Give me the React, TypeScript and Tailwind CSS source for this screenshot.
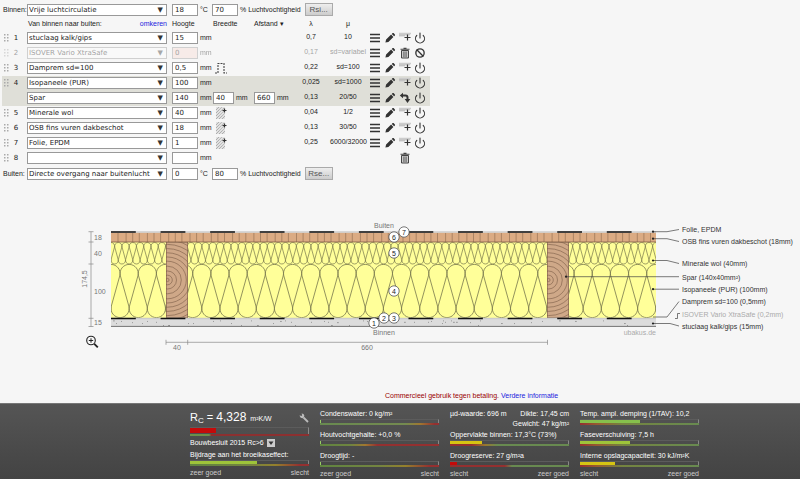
import { ReactNode } from "react";
import { Ban, Power } from "lucide-react";

type ActionKind = "menu" | "edit" | "add" | "power" | "trash" | "ban" | "turn" | "none";

interface Layer {
  nr: string;
  name: string;
  height: string;
  lambda: string;
  mu: string;
  width?: string;
  spacing?: string;
  shape?: "stud" | "hatch";
  selected?: boolean;
  disabled?: boolean;
  actions: ActionKind[];
}

const LAYERS: Layer[] = [
  { nr: "1", name: "stuclaag kalk/gips", height: "15", lambda: "0,7", mu: "10", actions: ["menu", "edit", "add", "power"] },
  { nr: "2", name: "ISOVER Vario XtraSafe", height: "0", lambda: "0,17", mu: "sd=variabel", disabled: true, actions: ["menu", "edit", "trash", "ban"] },
  { nr: "3", name: "Damprem sd=100", height: "0,5", lambda: "0,22", mu: "sd=100", shape: "stud", actions: ["menu", "edit", "add", "power"] },
  { nr: "4", name: "Isopaneele (PUR)", height: "100", lambda: "0,025", mu: "sd=1000", selected: true, actions: ["menu", "edit", "add", "power"] },
  { nr: "", name: "Spar", height: "140", lambda: "0,13", mu: "20/50", width: "40", spacing: "660", selected: true, actions: ["menu", "edit", "turn", "power"] },
  { nr: "5", name: "Minerale wol", height: "40", lambda: "0,04", mu: "1/2", shape: "hatch", actions: ["menu", "edit", "add", "power"] },
  { nr: "6", name: "OSB fins vuren dakbeschot", height: "18", lambda: "0,13", mu: "30/50", shape: "hatch", actions: ["menu", "edit", "add", "power"] },
  { nr: "7", name: "Folie, EPDM", height: "1", lambda: "0,25", mu: "6000/32000", shape: "hatch", actions: ["menu", "edit", "add", "power"] },
  { nr: "8", name: "", height: "", lambda: "", mu: "", actions: ["none", "none", "trash", "none"] },
];

const ACTION_LABELS: Record<ActionKind, string> = {
  menu: "Menu",
  edit: "Bewerken",
  add: "Laag toevoegen",
  power: "Uitschakelen",
  trash: "Verwijderen",
  ban: "Inschakelen",
  turn: "Draaien",
  none: "",
};

function ActionIcon({ kind }: { kind: ActionKind }) {
  if (kind === "power") return <Power size={12} strokeWidth={2.2} />;
  if (kind === "ban") return <Ban size={10} strokeWidth={3.2} />;
  return (
    <svg width="12" height="12" viewBox="0 0 12 12" fill="none">
      {kind === "menu" && <path d="M1 2.5h10M1 6h10M1 9.5h10" stroke="#333" strokeWidth="1.5" />}
      {kind === "edit" && (
        <path d="M1.4 10.6l.7-3 5-5 2.3 2.3-5 5zM7.8 1.9l.8-.8q.5-.4 1 0l1.3 1.3q.4.5 0 1l-.8.8z" fill="#333" />
      )}
      {kind === "add" && (
        <>
          <path d="M0 1.5h12M0 3.8h6" stroke="#ccc" strokeWidth="1.6" />
          <path d="M0 2.8h11" stroke="#999" strokeWidth=".6" />
          <path d="M8.5 2.5v6M5.5 5.5h6" stroke="#333" strokeWidth="1.2" />
        </>
      )}
      {kind === "trash" && (
        <>
          <path d="M2.5 3.5h7v7.5h-7z" fill="#ccc" stroke="#444" />
          <path d="M1.5 2.3h9M4.5 1.2h3" stroke="#444" strokeWidth="1.1" />
          <path d="M4.7 4.5v5.5M6 4.5v5.5M7.3 4.5v5.5" stroke="#555" strokeWidth=".7" />
        </>
      )}
      {kind === "turn" && (
        <>
          <path d="M3 3.5h3.5q2 0 2 2v2" stroke="#333" strokeWidth="2" />
          <path d="M4 .8v5.4L.8 3.5zM5.7 7h5.6l-2.8 4z" fill="#333" />
        </>
      )}
    </svg>
  );
}

function ShapeIcon({ shape }: { shape: "stud" | "hatch" }) {
  if (shape === "stud") {
    return (
      <svg width="14" height="12" viewBox="0 0 14 12" fill="none">
        <path d="M1 11h3V1.500h6V11h3" stroke="#444" strokeWidth="1.1" strokeDasharray="2 1" />
      </svg>
    );
  }
  return (
    <svg width="14" height="12" viewBox="0 0 14 12" fill="none">
      <path d="M2 0h9v12H2z" fill="#e2e2e2" />
      <path d="M2 3l3-3M2 6l6-6M2 9l8-8M2 12l9-9M5 12l6-6M8 12l3-3" stroke="#888" strokeWidth=".8" strokeDasharray="1 .6" />
      <path d="M10.500 1.500v4M8.500 3.500h4" stroke="#333" strokeWidth="1.2" />
    </svg>
  );
}

function SelectBox({ label, value, disabled }: { label: string; value: string; disabled?: boolean }) {
  return (
    <span className="relative block h-3 w-[140px] shrink-0">
      <select
        aria-label={label}
        disabled={disabled}
        defaultValue={value}
        className="block h-3 w-full appearance-none border border-[#999] bg-white pl-px font-['DejaVu_Sans',sans-serif] text-[7px] leading-[10px] text-[#222]"
      >
        <option value={value}>{value}</option>
      </select>
      <span className="pointer-events-none absolute top-0 right-1 font-['DejaVu_Sans',sans-serif] text-[7px] leading-3 text-[#333]">▼</span>
    </span>
  );
}

function NumberBox({ label, value, narrow, disabled }: { label: string; value: string; narrow?: boolean; disabled?: boolean }) {
  return (
    <input
      type="text"
      aria-label={label}
      defaultValue={value}
      disabled={disabled}
      className={`block h-3 shrink-0 border border-[#999] pl-0.5 font-['DejaVu_Sans',sans-serif] text-[7px] leading-[10px] text-[#222] ${narrow ? "w-[21px]" : "w-[26px]"} ${disabled ? "bg-[#fbdcd4]" : "bg-white"}`}
    />
  );
}

function ClimateRow({ side, surface, temp, humidity, button }: { side: string; surface: string; temp: string; humidity: string; button: string }) {
  return (
    <div className="flex h-[15px] items-center pl-[3px]">
      <span className="w-6 shrink-0">{side}:</span>
      <SelectBox label={side} value={surface} />
      <span className="flex w-[45px] shrink-0 items-center gap-0.5 pl-[5px]">
        <NumberBox label={`${side} temperatuur`} value={temp} />
        °C
      </span>
      <label className="flex items-center gap-0.5 whitespace-nowrap">
        <NumberBox label={`${side} luchtvochtigheid`} value={humidity} />
        % Luchtvochtigheid
      </label>
      <button className="ml-1 h-[13px] w-7 border border-[#aaa] bg-linear-to-b from-[#eee] to-[#ccc] text-[8px] leading-none text-[#555]">
        {button}
      </button>
    </div>
  );
}

function LayerRow({ layer }: { layer: Layer }) {
  const label = layer.name || `laag ${layer.nr}`;
  const dim = layer.disabled ? "opacity-40" : "";
  return (
    <tr className={`h-[15px] align-top ${layer.selected ? "bg-[#dfdfd8]" : ""}`}>
      <td className={`pt-0.5 pl-0.5 ${dim}`}>
        {layer.nr && (
          <svg width="5" height="10" viewBox="0 0 5 10" fill="#aaa">
            <path d="M0 1h1.500v1.500H0zM3 1h1.500v1.500H3zM0 4h1.500v1.500H0zM3 4h1.500v1.500H3zM0 7h1.500v1.500H0zM3 7h1.500v1.500H3z" />
          </svg>
        )}
      </td>
      <td className={`pt-px text-center font-['DejaVu_Sans',sans-serif] leading-3 ${dim}`}>{layer.nr}</td>
      <td className={`px-[5px] pt-px ${dim}`}>
        <SelectBox label={`Materiaal ${label}`} value={layer.name} disabled={layer.disabled} />
      </td>
      <td className={`pt-px ${dim}`}>
        <span className="flex items-center gap-0.5">
          <NumberBox label={`Hoogte ${label}`} value={layer.height} disabled={layer.disabled} />
          mm
        </span>
      </td>
      <td className="pt-px">
        {layer.width && (
          <span className="flex items-center gap-0.5">
            <NumberBox label={`Breedte ${label}`} value={layer.width} narrow />
            mm
          </span>
        )}
        {layer.shape && (
          <button aria-label={`Vorm ${label}`} className="ml-px block">
            <ShapeIcon shape={layer.shape} />
          </button>
        )}
      </td>
      <td className="pt-px">
        {layer.spacing && (
          <span className="flex items-center gap-0.5">
            <NumberBox label={`Afstand ${label}`} value={layer.spacing} narrow />
            mm
          </span>
        )}
      </td>
      <td className={`text-center leading-3 ${dim}`}>{layer.lambda}</td>
      <td className={`text-center leading-3 whitespace-nowrap ${dim}`}>{layer.mu}</td>
      <td className="pt-px pl-px">
        <span className="flex">
          {layer.actions.map((kind, i) =>
            kind === "none" ? (
              <span key={i} className="w-[15px]" />
            ) : (
              <button key={i} aria-label={`${ACTION_LABELS[kind]} ${label}`} className="flex h-3 w-[15px] items-center justify-center text-[#333]">
                <ActionIcon kind={kind} />
              </button>
            )
          )}
        </span>
      </td>
    </tr>
  );
}

function LayerTable() {
  return (
    <table className="ml-0.5 w-[428px] table-fixed border-collapse">
      <colgroup>
        <col className="w-2" />
        <col className="w-3" />
        <col className="w-[150px]" />
        <col className="w-[41px]" />
        <col className="w-[41px]" />
        <col className="w-[38px]" />
        <col className="w-[38px]" />
        <col className="w-[36px]" />
        <col className="w-[64px]" />
      </colgroup>
      <thead>
        <tr className="h-3.5 text-left">
          <th></th>
          <th></th>
          <th className="px-[5px] font-normal">
            <span className="flex justify-between pl-px">
              Van binnen naar buiten:
              <a href="#omkeren" className="text-[#2222dd]">omkeren</a>
            </span>
          </th>
          <th className="font-normal">Hoogte</th>
          <th className="font-normal">Breedte</th>
          <th className="font-normal whitespace-nowrap">Afstand ▾</th>
          <th className="text-center font-normal">λ</th>
          <th className="text-center font-normal">μ</th>
          <th></th>
        </tr>
      </thead>
      <tbody>
        {LAYERS.map((layer) => (
          <LayerRow key={layer.nr + layer.name} layer={layer} />
        ))}
      </tbody>
    </table>
  );
}

const LEFT = 111;
const RIGHT = 656;
const STUDS = [166, 547];

// Continuous loop of circles joined by their inner tangents
function insulationPath(top: number, bottom: number, pitch: number) {
  const r = pitch / 2;
  const ct = top + r;
  const cb = bottom - r;
  const h = cb - ct;
  const tilt = Math.asin((2 * r) / Math.hypot(r, h)) - Math.atan(r / h);
  const dx = r * Math.cos(tilt);
  const dy = r * Math.sin(tilt);
  let d = "";
  for (let c = LEFT - pitch; c < RIGHT + pitch; c += pitch) {
    d += d ? "L" : "M";
    d += `${c - dx} ${ct + dy}A${r} ${r} 0 1 1 ${c + dx} ${ct + dy}`;
    d += `L${c + r - dx} ${cb - dy}A${r} ${r} 0 1 0 ${c + r + dx} ${cb - dy}`;
  }
  return d;
}

const MARKERS = [
  { n: 6, x: 394, y: 237 },
  { n: 7, x: 404, y: 232 },
  { n: 5, x: 394, y: 253 },
  { n: 4, x: 394, y: 291 },
  { n: 1, x: 374, y: 323 },
  { n: 2, x: 384, y: 318 },
  { n: 3, x: 394, y: 318 },
];

const CALLOUTS = [
  { text: "Folie, EPDM", y: 229, line: "M653 231.700H667L679 229.500", dot: [653, 231.7] },
  { text: "OSB fins vuren dakbeschot (18mm)", y: 241, line: "M653 238.700H667L679 241.500", dot: [653, 238.7] },
  { text: "Minerale wol (40mm)", y: 263, line: "M653 260.500H667L679 263.500", dot: [653, 260.5] },
  { text: "Spar (140x40mm²)", y: 277, line: "M566 276.700H679", dot: [566, 276.7] },
  { text: "Isopaneele (PUR) (100mm)", y: 289, line: "M653 289.200H679", dot: [653, 289.2] },
  { text: "Damprem sd=100 (0,5mm)", y: 301, line: "M653 317H667L679 301.500", dot: null },
  { text: "ISOVER Vario XtraSafe (0,2mm)", y: 314, line: "M675 318.500H677.500V313.500H680", dot: null, muted: true },
  { text: "stuclaag kalk/gips (15mm)", y: 326, line: "M653 323.500H670L679 326", dot: [653, 323.5] },
];

const SPECKLES = Array.from({ length: 56 }, (_, i) => ({
  x: LEFT + 2 + ((i * i * 31 + i * 97) % 541),
  y: 320.5 + ((i * i * 7 + i * 3) % 11) / 2.2,
  w: i % 4 === 0 ? 1.8 : 1,
}));

function Membrane({ y }: { y: number }) {
  return (
    <>
      <path d={`M${LEFT} ${y}H${RIGHT}`} stroke="#ccc" strokeWidth="1.3" />
      <path d={`M${LEFT} ${y}H${RIGHT}`} stroke="#111" strokeWidth="1.5" strokeDasharray="24.800 24.780" />
    </>
  );
}

function CrossSection() {
  return (
    <svg
      viewBox="75 215 725 140"
      className="h-auto w-full max-w-[725px] font-['Liberation_Sans',Arial,sans-serif] text-[7px]"
      role="img"
      aria-label="Doorsnede van de constructie"
      fill="none"
    >
      <defs>
        <clipPath id="section">
          <rect x={LEFT} y="231" width={RIGHT - LEFT} height="96" />
        </clipPath>
        {STUDS.map((x) => (
          <clipPath key={x} id={`stud-${x}`}>
            <rect x={x} y="242" width="22" height="76" />
          </clipPath>
        ))}
      </defs>

      <g clipPath="url(#section)">
        <rect x={LEFT} y="242" width={RIGHT - LEFT} height="76" fill="#ffff99" />
        <path d={insulationPath(242.5, 264, 7.27)} stroke="#77774c" strokeWidth=".7" />
        <path d={insulationPath(264.4, 317.6, 18.16)} stroke="#77774c" strokeWidth=".8" />
        <rect x={LEFT} y="232.500" width={RIGHT - LEFT} height="9.500" fill="#dbab83" />
        {Array.from({ length: 77 }, (_, i) => (
          <path key={i} d={`M${LEFT + 7 + i * 7.1 + ((i * 5) % 3) * 0.5} 233v9`} stroke="#8c6a4e" strokeWidth=".6" />
        ))}
        <path d={`M${LEFT} 242H${RIGHT}`} stroke="#7d5c44" strokeWidth=".8" />
        <rect x={LEFT} y="319" width={RIGHT - LEFT} height="7.500" fill="#dcdcdc" />
        {SPECKLES.map((s, i) => (
          <rect key={i} x={s.x} y={s.y} width={s.w} height=".8" fill="#8a8a8a" />
        ))}
        <path d={`M${LEFT} 326.400H${RIGHT}`} stroke="#555" strokeWidth=".8" />
      </g>

      {STUDS.map((x) => (
        <g key={x} clipPath={`url(#stud-${x})`} stroke="#7a5c46">
          <rect x={x} y="242" width="22" height="76" fill="#cfa888" strokeWidth="1.2" />
          {[1.6, 4.8, 9, 13.8, 18.8, 23, 27.2, 31.4, 35.6, 40].map((r) => (
            <circle key={r} cx={x + 1.5} cy="280" r={r} strokeWidth=".6" />
          ))}
        </g>
      ))}
      <Membrane y={232} />
      <Membrane y={318.5} />

      {/* Dimensions */}
      <g stroke="#888" strokeWidth=".7">
        <path d="M91 231.700V326.500M88.500 231.700h5M88.500 242h5M88.500 264h5M88.500 318.300h5M88.500 326.500h5" />
        <path d="M166 342.300H547.500M166 339.800v5M187.700 339.800v5M547.500 339.800v5" />
      </g>
      <g fill="#777">
        <text x="94" y="240">18</text>
        <text x="94" y="256">40</text>
        <text x="94" y="294">100</text>
        <text x="94" y="325">15</text>
        <text textAnchor="middle" transform="translate(87 279) rotate(-90)">174,5</text>
        <text x="177" y="350" textAnchor="middle">40</text>
        <text x="367" y="350" textAnchor="middle">660</text>
        <text x="384" y="228" textAnchor="middle">Buiten</text>
        <text x="384" y="335" textAnchor="middle">Binnen</text>
        <text x="656" y="335" textAnchor="end" fill="#aaa">ubakus.de</text>
      </g>

      {MARKERS.map((m) => (
        <g key={m.n}>
          <circle cx={m.x} cy={m.y} r="5.200" fill="#fff" stroke="#555" strokeWidth=".8" />
          <text x={m.x} y={m.y + 3} textAnchor="middle" fill="#222">{m.n}</text>
        </g>
      ))}

      {CALLOUTS.map((c) => (
        <g key={c.text}>
          <path d={c.line} stroke="#444" strokeWidth=".7" />
          {c.dot && <circle cx={c.dot[0]} cy={c.dot[1]} r="1.100" fill="#222" />}
          <text x="682" y={c.y + 3} fill={c.muted ? "#aaa" : "#333"}>{c.text}</text>
        </g>
      ))}

      {/* Zoom */}
      <g stroke="#222">
        <circle cx="91" cy="340.500" r="4.300" strokeWidth="1.100" />
        <path d="M88.800 340.500h4.400M91 338.300v4.400" strokeWidth="1" />
        <path d="M94.300 343.800L97.800 347.300" strokeWidth="1.900" />
      </g>
    </svg>
  );
}

const SCALES = {
  rc: "bg-[linear-gradient(90deg,#6c8f4a_0,#6c8f4a_16%,#8c3030_18%,#8c3030_100%)]",
  goodToBad: "bg-[linear-gradient(90deg,#5f8440_0,#748440_50%,#94802c_72%,#943030_92%)]",
  mostlyGood: "bg-[linear-gradient(90deg,#688a50_0,#748a50_72%,#a07830_84%,#943030_96%)]",
  moisture: "bg-[linear-gradient(90deg,#5f8440_0,#6f8440_26%,#a07830_38%,#943030_48%)]",
  surface: "bg-[linear-gradient(90deg,#943030_0,#943030_18%,#98782f_30%,#688a50_40%)]",
  reserve: "bg-[linear-gradient(90deg,#943030_0,#943030_46%,#688a50_52%)]",
  badToGood: "bg-[linear-gradient(90deg,#943030_0,#965a30_14%,#748440_36%,#688a50_100%)]",
};

function Meter({ label, value, fill, scale }: { label: ReactNode; value: number; fill: string; scale: string }) {
  return (
    <div>
      <div className="h-2.5 leading-[10px] whitespace-nowrap">{label}</div>
      <div className="h-1 border-t border-r border-t-[#5c5c5c] border-r-[#888]" role="meter" aria-valuenow={value} aria-valuemin={0} aria-valuemax={100} aria-label="Waarde">
        <div className={`h-[3px] ${fill}`} style={{ width: `${value}%` }} />
      </div>
      <div className={`h-0.5 ${scale}`} />
    </div>
  );
}

function Caption({ left, right }: { left: string; right: string }) {
  return (
    <div className="flex justify-between pt-0.5 leading-[10px] text-[#ccc]">
      <span>{left}</span>
      <span>{right}</span>
    </div>
  );
}

function Results() {
  return (
    <footer className="mt-auto flex gap-[11px] border-t border-[#777] bg-linear-to-b from-[#555] to-[#434343] pt-[5px] pb-px pl-[190px] text-white">
      <section className="w-[119px] shrink-0">
        <div className="flex h-[18px] items-center justify-between">
          <div className="flex items-baseline text-[12px] leading-[18px] whitespace-nowrap">
            <span className="text-[11px]">R<sub className="text-[8px]">C</sub> =&nbsp;</span>
            4,328
            <span className="pl-1 text-[7px]">m²K/W</span>
          </div>
          <button aria-label="Instellingen">
            <svg width="10" height="10" viewBox="0 0 10 10" fill="none">
              <path d="M4.500 4.500L9 9" stroke="#bbb" strokeWidth="1.800" />
              <path d="M.6 2.200L2.400 3 3.200 2.300 2.600.5Q4.600.3 5.300 2.200 5.500 4.500 3.600 5.200 1 5.200.6 2.200z" fill="#bbb" />
            </svg>
          </button>
        </div>
        <div className="border-t border-r border-t-[#5c5c5c] border-r-[#888] pb-px" role="meter" aria-label="Rc" aria-valuenow={22} aria-valuemin={0} aria-valuemax={100}>
          <div className="h-[5px] bg-[#c40a0a]" style={{ width: "22%" }} />
        </div>
        <div className={`h-0.5 ${SCALES.rc}`} />
        <div className="flex h-3.5 items-center gap-[3px]">
          Bouwbesluit 2015 Rc&gt;6
          <button aria-label="Norm kiezen" className="flex size-2 items-center justify-center bg-[#ccc]">
            <svg width="6" height="6" viewBox="0 0 6 6"><path d="M.5 1.500h5L3 5z" fill="#333" /></svg>
          </button>
        </div>
        <Meter label="Bijdrage aan het broeikaseffect:" value={57} fill="bg-[#9ec43a]" scale={SCALES.goodToBad} />
        <Caption left="zeer goed" right="slecht" />
      </section>

      <section className="w-[119px] shrink-0">
        <div className="flex flex-col gap-[5px]">
          <Meter label="Condenswater: 0 kg/m²" value={1} fill="bg-[#9c6]" scale={SCALES.mostlyGood} />
          <Meter label="Houtvochtgehalte: +0,0 %" value={1} fill="bg-[#9c6]" scale={SCALES.moisture} />
          <Meter label="Droogtijd: -" value={1} fill="bg-[#9c6]" scale={SCALES.goodToBad} />
        </div>
        <Caption left="zeer goed" right="slecht" />
      </section>

      <section className="w-[119px] shrink-0">
        <div className="flex h-[21px] justify-between leading-[10px]">
          <span>µd-waarde: 696 m</span>
          <span className="text-right">Dikte: 17,45 cm<br />Gewicht: 47 kg/m²</span>
        </div>
        <div className="flex flex-col gap-[5px]">
          <Meter label="Oppervlakte binnen: 17,3°C (73%)" value={27} fill="bg-[#d6c413]" scale={SCALES.surface} />
          <Meter label="Droogreserve: 27 g/m²a" value={6} fill="bg-[#c40a0a]" scale={SCALES.reserve} />
        </div>
        <Caption left="slecht" right="zeer goed" />
      </section>

      <section className="w-[119px] shrink-0">
        <div className="flex flex-col gap-[5px]">
          <Meter label="Temp. ampl. demping (1/TAV): 10,2" value={51} fill="bg-[#86c04c]" scale={SCALES.badToGood} />
          <Meter label="Faseverschuiving: 7,5 h" value={42} fill="bg-[#9ec43a]" scale={SCALES.badToGood} />
          <Meter label="Interne opslagcapaciteit: 30 kJ/m²K" value={30} fill="bg-[#d6c413]" scale={SCALES.badToGood} />
        </div>
        <Caption left="slecht" right="zeer goed" />
      </section>
    </footer>
  );
}

export default function App() {
  return (
    <div className="flex min-h-screen flex-col bg-[#f6f6f6] font-['Liberation_Sans',Arial,sans-serif] text-[7px] leading-[10px] text-[#222]">
      <form className="pt-0.5">
        <ClimateRow side="Binnen" surface="Vrije luchtcirculatie" temp="18" humidity="70" button="Rsi..." />
        <LayerTable />
        <ClimateRow side="Buiten" surface="Directe overgang naar buitenlucht" temp="0" humidity="80" button="Rse..." />
      </form>
      <div className="flex pt-[34px] pl-[75px]">
        <CrossSection />
      </div>
      <p className="pt-9 pb-0.5 pl-[385px] text-[#900]">
        Commercieel gebruik tegen betaling.{" "}
        <a href="#informatie" className="text-[#2222dd]">Verdere informatie</a>
      </p>
      <Results />
    </div>
  );
}
